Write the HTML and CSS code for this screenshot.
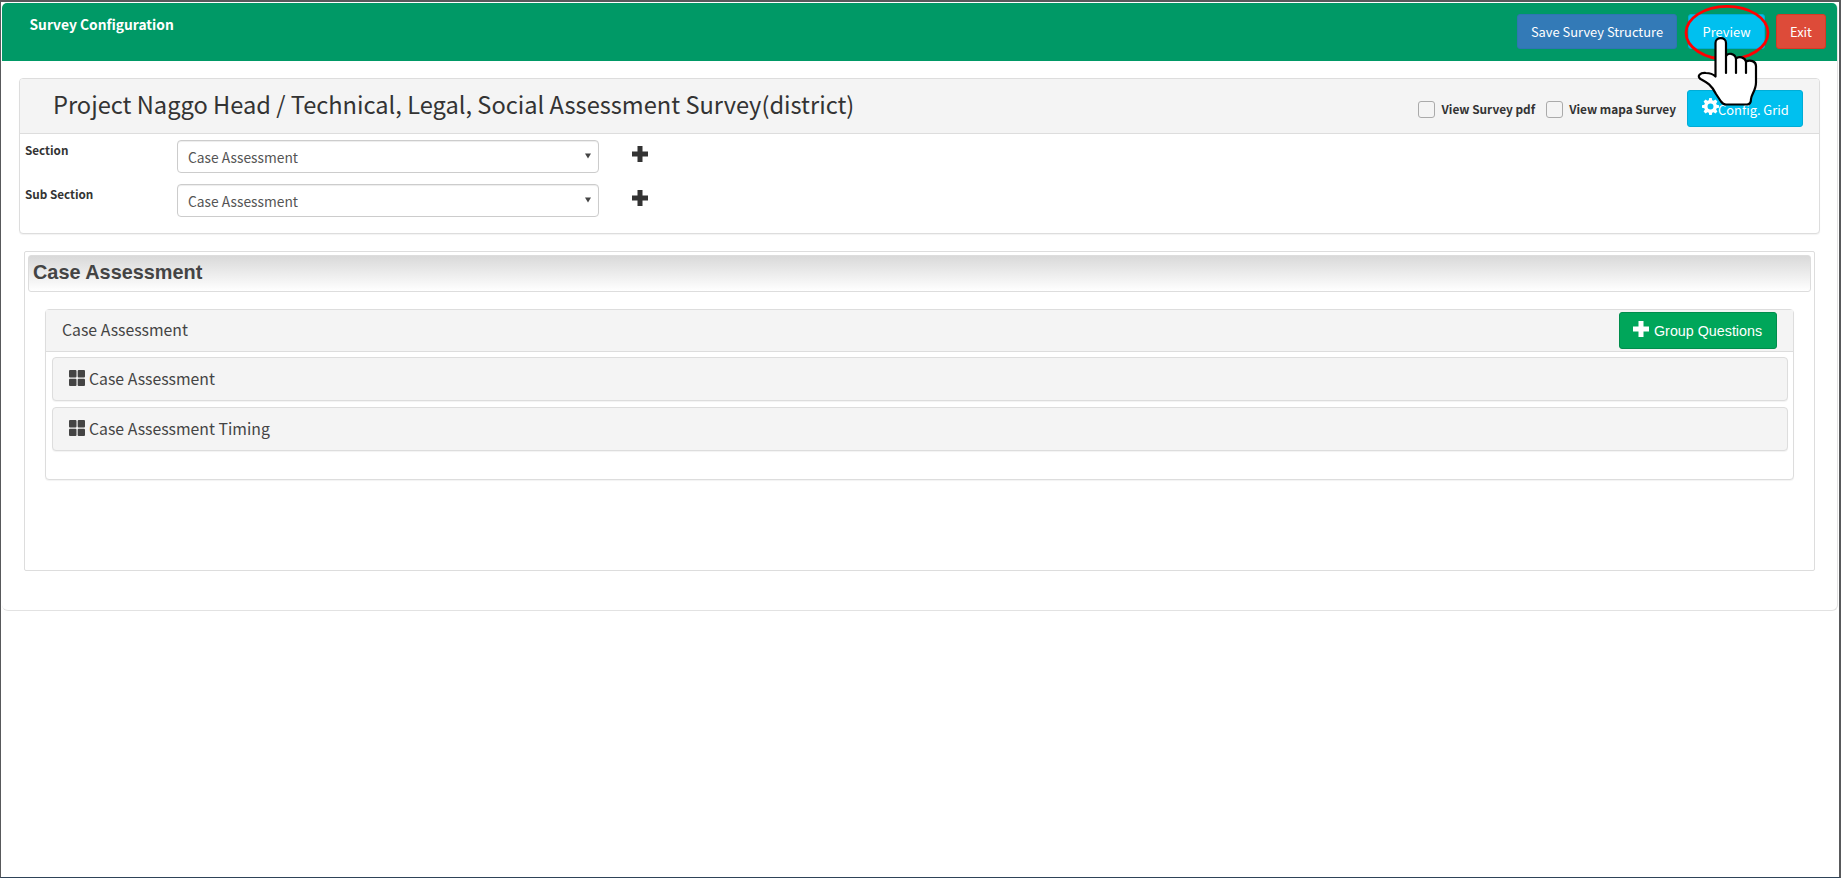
FILE: index.html
```html
<!DOCTYPE html>
<html lang="en">
<head>
<meta charset="utf-8">
<title>Survey Configuration</title>
<link rel="stylesheet" href="styles.css">
</head>
<body>
<div class="window">
  <main class="page">
    <header class="topbar">
      <h1 class="topbar-title">Survey Configuration</h1>
      <div class="topbar-actions">
        <button class="btn btn-primary">Save Survey Structure</button>
        <button class="btn btn-info">Preview</button>
        <button class="btn btn-danger">Exit</button>
      </div>
    </header>

    <section class="card project">
      <div class="project-head">
        <h2 class="project-title">Project Naggo Head / Technical, Legal, Social Assessment Survey(district)</h2>
        <div class="project-tools">
          <label class="check"><span class="box"></span><span>View Survey pdf</span></label>
          <label class="check"><span class="box"></span><span>View mapa Survey</span></label>
          <button class="btn-config">
            <svg class="gear" viewBox="0 0 16 16"><path fill="#fff" fill-rule="evenodd" d="M6.8 0h2.4l.4 2.2 1.3.5 1.8-1.2 1.8 1.8-1.2 1.8.5 1.3 2.2.4v2.4l-2.2.4-.5 1.3 1.2 1.8-1.8 1.8-1.8-1.2-1.3.5-.4 2.2H6.8l-.4-2.2-1.3-.5-1.8 1.2-1.8-1.8 1.2-1.8-.5-1.3L0 9.200V6.800l2.200-.4.5-1.300-1.200-1.800 1.800-1.800 1.800 1.200 1.300-.5zM8 5.200a2.800 2.800 0 1 0 0 5.600 2.800 2.800 0 0 0 0-5.600z"/></svg>
            <span>Config. Grid</span>
          </button>
        </div>
      </div>
      <div class="fields">
        <div class="field">
          <span class="field-label">Section</span>
          <div class="select"><span>Case Assessment</span><svg class="caret" viewBox="0 0 7 6"><path d="M0 0h7L3.500 6z" fill="#444"/></svg></div>
          <svg class="plus" viewBox="0 0 16 16"><path d="M5.500 0h5v5.500H16v5h-5.500V16h-5v-5.500H0v-5h5.500z" fill="#333"/></svg>
        </div>
        <div class="field">
          <span class="field-label">Sub Section</span>
          <div class="select"><span>Case Assessment</span><svg class="caret" viewBox="0 0 7 6"><path d="M0 0h7L3.500 6z" fill="#444"/></svg></div>
          <svg class="plus" viewBox="0 0 16 16"><path d="M5.500 0h5v5.500H16v5h-5.500V16h-5v-5.500H0v-5h5.500z" fill="#333"/></svg>
        </div>
      </div>
    </section>

    <section class="section-box">
      <h3 class="section-title">Case Assessment</h3>
      <div class="card group">
        <div class="group-head">
          <span class="group-text">Case Assessment</span>
          <button class="btn-group"><svg class="plus-sm" viewBox="0 0 16 16"><path d="M5.500 0h5v5.500H16v5h-5.500V16h-5v-5.500H0v-5h5.500z" fill="#fff"/></svg><span>Group Questions</span></button>
        </div>
        <div class="rows">
          <div class="row"><svg class="grid" viewBox="0 0 16 16"><g fill="#444"><rect width="7.500" height="7.500" rx="1"/><rect x="8.700" width="7.300" height="7.500" rx="1"/><rect y="8.700" width="7.500" height="7.300" rx="1"/><rect x="8.700" y="8.700" width="7.300" height="7.300" rx="1"/></g></svg><span class="group-text">Case Assessment</span></div>
          <div class="row"><svg class="grid" viewBox="0 0 16 16"><g fill="#444"><rect width="7.500" height="7.500" rx="1"/><rect x="8.700" width="7.300" height="7.500" rx="1"/><rect y="8.700" width="7.500" height="7.300" rx="1"/><rect x="8.700" y="8.700" width="7.300" height="7.300" rx="1"/></g></svg><span class="group-text">Case Assessment Timing</span></div>
        </div>
      </div>
    </section>
  </main>
</div>

<svg class="pointer" viewBox="0 0 100 110" width="100" height="110">
  <ellipse cx="47" cy="32.800" rx="41" ry="26.500" fill="none" stroke="#f00" stroke-width="2.800"/>
  <path d="M35.500 76V43c0-6.500 10.500-6.500 10.500 0v13c2-3.500 8.500-3 10 2.500 3-2.500 8.500-1.500 10 3 4-2 10-.5 10 4.500v16.500c0 8-5 12.500-5 16.500 0 3.500-1.500 5.500-4 5.500H46c-2.500 0-3.500-1-5-3L36 94C31 84 26 82 20.500 79c-4-3-.5-6.500 5.500-6 4 0 7 1 9.500 3.500z" fill="#fff" stroke="#000" stroke-width="2.200" stroke-linejoin="round"/>
  <path d="M46 56v17M56 58v15M66 61v12" fill="none" stroke="#000" stroke-width="2.200" stroke-linecap="round"/>
</svg>
</body>
</html>
```
FILE: styles.css
```css
* { box-sizing: border-box; }
body {
  margin: 0;
  color: #333;
  font-family: "Noto Sans CJK SC", "Noto Sans", sans-serif;
  font-size: 14px;
  line-height: 20px;
  white-space: nowrap;
}
h1, h2, h3 { margin: 0; font-weight: 400; }
button { font: inherit; color: #fff; margin: 0; border-radius: 3px; white-space: nowrap; }
.window {
  height: 878px;
  border: solid #58595b;
  border-width: 2px 2px 1px 1px;
  border-bottom-color: #2e4358;
  padding: 1px 1px 0;
  background: #fff;
  overflow: hidden;
}
.page {
  height: 608px;
  border: 1px solid #e2e2e2;
  border-width: 0 1px 1px 0;
  border-radius: 6px;
}
.topbar {
  display: flex;
  justify-content: space-between;
  height: 58px;
  padding: 11px 11px 0 28px;
  background: #009966;
  border-radius: 5px 5px 0 0;
}
.topbar-title { margin-left: -.5px; line-height: 20px; font-size: 13.800px; font-weight: 700; color: #fff; }
.topbar-actions { display: flex; gap: 11px; }
.btn { height: 35px; padding: 0; border: 1px solid; font-size: 12.900px; line-height: 33px; text-align: center; }
.btn-primary { width: 160px; background: #337ab7; border-color: #2e75b2; }
.btn-info { width: 77px; background: #00c0ef; border-color: #00acd6; }
.btn-danger { width: 50px; background: #dd4b39; border-color: #d73925; }
.card {
  border: 1px solid #ddd;
  border-radius: 4px;
  background: #fff;
  box-shadow: 0 1px 1px rgba(0, 0, 0, .05);
}
.project { height: 156px; margin: 17px 17px 0 17px; }
.project-head {
  display: flex;
  justify-content: space-between;
  height: 55px;
  padding: 11px 16px 0 33px;
  background: #f4f4f4;
  border-bottom: 1px solid #ddd;
  border-radius: 3px 3px 0 0;
}
.project-title { font-size: 23.640px; line-height: 29px; }
.project-tools { display: flex; }
.check { display: flex; gap: 6px; height: 17px; margin: 11px 11px 0 0; font-size: 11.850px; font-weight: 700; line-height: 16px; }
.box { width: 17px; height: 17px; border: 1px solid #aaa; border-radius: 3px; background: #f4f4f4; }
.btn-config { display: flex; width: 116px; height: 37px; padding: 7px 14px; border: 1px solid #00acd6; background: #00c0ef; font-size: 12.900px; line-height: 23px; }
.gear { width: 17px; height: 17px; flex: none; margin-right: -1px; }
.fields { display: grid; gap: 11px; padding: 6px; }
.field { display: flex; height: 33px; }
.field-label { width: 152px; margin-left: -1px; font-size: 11.700px; font-weight: 700; line-height: 20px; }
.select {
  display: flex;
  justify-content: space-between;
  width: 422px;
  height: 33px;
  padding: 0 7px 0 10px;
  border: 1px solid #ccc;
  border-radius: 4px;
  box-shadow: inset 0 1px 1px rgba(0, 0, 0, .075);
  color: #555;
  font-size: 13.800px;
  line-height: 33px;
}
.caret { width: 6px; height: 6px; margin-top: 12px; }
.plus { width: 16px; height: 16px; margin: 6px 0 0 33px; }
.section-box { height: 320px; margin: 17px 22px 0 22px; padding: 3px; border: 1px solid #ddd; border-radius: 2px; }
.section-title {
  height: 37px;
  padding-left: 4px;
  border: 1px solid #ddd;
  border-radius: 3px;
  background: linear-gradient(#d9d9d9, #fff);
  color: #444;
  font: 700 19.880px/33px "Liberation Sans", Arial, sans-serif;
}
.group { height: 171px; margin: 17px 17px 0; }
.group-head {
  display: flex;
  justify-content: space-between;
  height: 42px;
  padding: 2px 16px 0 17px;
  background: #f4f4f4;
  border-bottom: 1px solid #ddd;
  color: #444;
  line-height: 36px;
}
.btn-group {
  display: flex;
  align-items: center;
  gap: 5px;
  width: 158px;
  height: 37px;
  padding: 0 13px;
  border: 1px solid #008d4c;
  background: #00a65a;
  font: 14.300px/36px "Liberation Sans", Arial, sans-serif;
}
.plus-sm { width: 16px; height: 16px; flex: none; margin-bottom: 3px; }
.rows { display: grid; gap: 6px; padding: 5px 5px 0 6px; }
.row {
  display: flex;
  gap: 5px;
  height: 44px;
  padding: 0 16px;
  border: 1px solid #ddd;
  border-radius: 4px;
  background: #f4f4f4;
  box-shadow: 0 1px 1px rgba(0, 0, 0, .05);
  color: #444;
  line-height: 42px;
}
.grid { width: 16px; height: 16px; margin-top: 12px; }
.group-text { margin-left: -1px; font-size: 15.800px; }
.pointer { position: absolute; left: 1680px; top: 0; }
```
